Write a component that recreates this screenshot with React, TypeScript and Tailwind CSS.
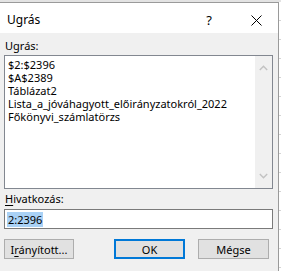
import React from 'react';

const items = ['$2:$2396', '$A$2389', 'Táblázat2', 'Lista_a_jóváhagyott_előirányzatokról_2022', 'Főkönyvi_számlatörzs'];

const Chevron: React.FC<{ down?: boolean }> = ({ down }) => (
  <svg width="9" height="6" viewBox="0 0 9 6" className={down ? 'rotate-180' : ''}>
    <path d="M0.8 5 L4.5 1.3 L8.2 5" fill="none" stroke="#c2c2c2" strokeWidth="1.4" />
  </svg>
);

export default function App() {
  return (
    <div className="w-[281px] h-[271px] overflow-hidden bg-white text-[11px] text-black font-['Noto_Sans',sans-serif] leading-none">
      {/* excel grid behind */}
      <div className="h-[2px] bg-[#e3e3e3]" />
      <div className="flex">
        {/* Dialog */}
        <div className="w-[279px] h-[269px] border-t border-r border-[#9a9a9a] flex flex-col bg-[#f0f0f0]">
          {/* Title bar */}
          <div className="h-[30px] bg-white flex items-center pl-[7px] pt-[4px] shrink-0">
            <span className="flex-1 text-[12px]">Ugrás</span>
            <span className="w-[12px] text-center text-[13px] mr-[36px]">?</span>
            <svg width="11" height="11" viewBox="0 0 11 11" className="mr-[16px]">
              <path d="M0.5 0.5 L10.5 10.5 M10.5 0.5 L0.5 10.5" stroke="#000" strokeWidth="1" />
            </svg>
          </div>

          {/* Body */}
          <div className="px-[4px] pr-[5px] pt-[6px]">
            <div className="pl-[1px] h-[14px] leading-[14px]">Ugrás:</div>
            <div className="mt-[2px] h-[134px] border border-[#828790] bg-white flex">
              <div className="flex-1 pl-[3px] pt-[2px]">
                {items.map(it => (
                  <div key={it} className="h-[13px] leading-[13px] whitespace-nowrap">{it}</div>
                ))}
              </div>
              <div className="w-[17px] bg-[#f0f0f0] flex flex-col items-center justify-between py-[9px]">
                <Chevron />
                <Chevron down />
              </div>
            </div>

            <div className="mt-[3px] pl-[1px] h-[14px] leading-[14px]">
              <span className="underline underline-offset-2">H</span>ivatkozás:
            </div>
            <div className="mt-[3px] h-[20px] border border-[#7a7a7a] bg-white flex items-center pl-[2px]">
              <span className="bg-[#a9d1f5] px-[1px] h-[15px] leading-[15px]">2:2396</span>
            </div>

            <div className="mt-[10px] flex items-center">
              <button className="w-[70px] h-[20px] border border-[#adadad] bg-[#e1e1e1] text-[11px] leading-none">
                I<span className="underline underline-offset-2">r</span>ányított...
              </button>
              <button className="ml-[40px] w-[71px] h-[20px] border-2 border-[#0078d7] bg-[#e1e1e1] text-[11px] leading-none">OK</button>
              <button className="ml-[13px] w-[71px] h-[20px] border border-[#adadad] bg-[#e1e1e1] text-[11px] leading-none">Mégse</button>
            </div>
          </div>
        </div>
        {/* excel grid to the right */}
        <div className="w-[2px] h-[269px] bg-[repeating-linear-gradient(to_bottom,#ffffff_0px,#ffffff_18px,#d4d4d4_18px,#d4d4d4_19px)]" />
      </div>
    </div>
  );
}
